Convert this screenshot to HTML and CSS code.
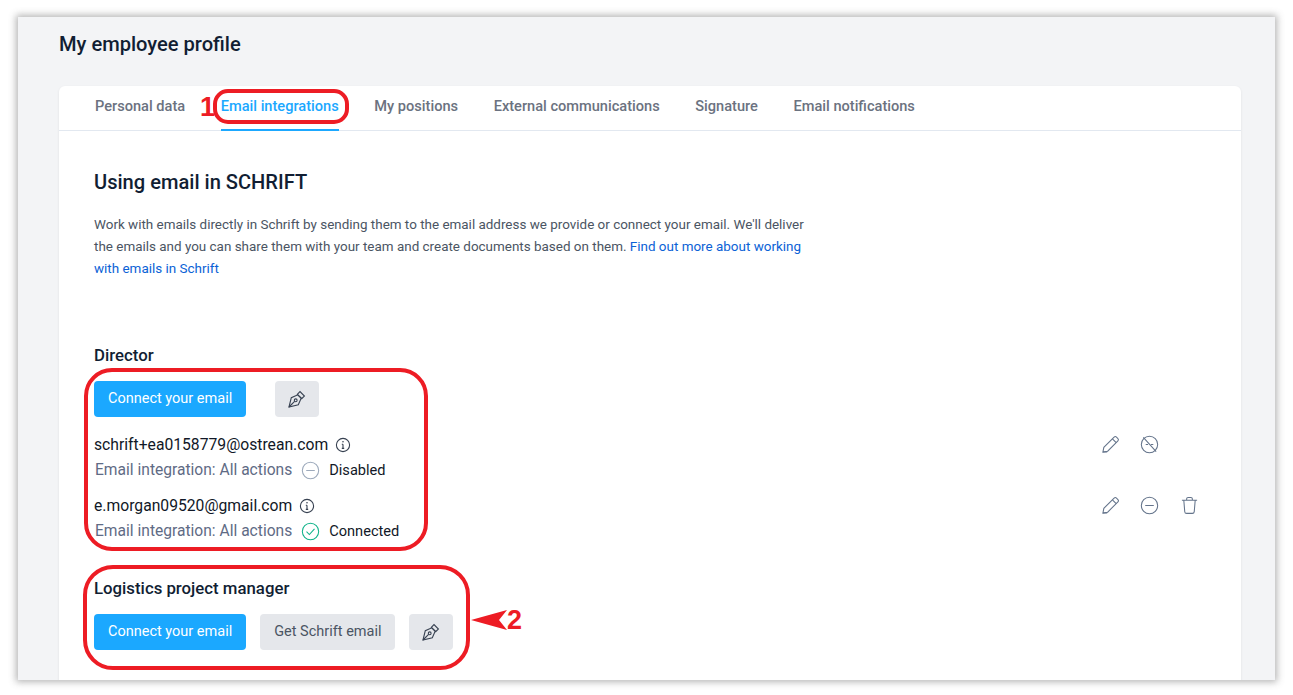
FILE: index.html
```html
<!DOCTYPE html>
<html lang="en">
<head>
    <meta charset="UTF-8">
    <meta name="viewport" content="width=device-width, initial-scale=1.0">
    <title>My employee profile</title>
    <link rel="stylesheet" href="styles.css">
</head>
<body>
    <svg class="icon-defs" width="0" height="0" aria-hidden="true">
        <symbol id="pen-nib" viewBox="0 0 20 20">
            <path d="M2 18L4.3 8.7l6.5-2.9 3.4 3.4-2.9 6.5z"/>
            <path d="M10.3 5.3L13 2.6 17.4 7l-2.7 2.7z"/>
            <path d="M2 18l5.6-5.6"/>
            <circle cx="8.7" cy="11.3" r="1.4"/>
        </symbol>
        <symbol id="pencil" viewBox="0 0 20 20">
            <path d="M2 18l1-5L13.8 2.2a1.8 1.8 0 0 1 2.5 0l1.5 1.5a1.8 1.8 0 0 1 0 2.5L7 17z"/>
            <path d="M2 18h4.5M12 4l4 4"/>
        </symbol>
        <symbol id="minus-circle" viewBox="0 0 20 20">
            <circle cx="10" cy="10" r="8.6"/>
            <path d="M5.5 10h9"/>
        </symbol>
    </svg>

    <div class="window">
        <h1 class="page-title">My employee profile</h1>

        <div class="card">
            <div class="tabs">
                <span class="tab">Personal data</span>
                <span class="tab active">Email integrations</span>
                <span class="tab">My positions</span>
                <span class="tab">External communications</span>
                <span class="tab">Signature</span>
                <span class="tab">Email notifications</span>
            </div>

            <div class="content">
                <h2 class="section-title">Using email in SCHRIFT</h2>
                <p class="intro">
                    Work with emails directly in Schrift by sending them to the email address we provide or connect your email. We'll deliver
                    the emails and you can share them with your team and create documents based on them.
                    <a class="link">Find out more about working with emails in Schrift</a>
                </p>

                <!-- Director -->
                <h3 class="position director">Director</h3>
                <div class="btn-row wide">
                    <button class="btn primary">Connect your email</button>
                    <button class="btn square"><svg class="pen"><use href="#pen-nib"/></svg></button>
                </div>

                <div class="mail first">
                    <div class="mail-info">
                        <div class="mail-address">schrift+ea0158779@ostrean.com
                            <svg class="info" viewBox="0 0 16 16"><circle cx="8" cy="8" r="6.6"/><path d="M8 7.2v4M6.8 11.4h2.4M6.8 7.2H8"/><circle class="dot" cx="8" cy="4.8" r=".8"/></svg>
                        </div>
                        <div class="mail-status">
                            <span class="status-label">Email integration: All actions</span>
                            <svg class="status-icon off"><use href="#minus-circle"/></svg>
                            <span class="status-text">Disabled</span>
                        </div>
                    </div>
                    <div class="mail-actions">
                        <svg class="action"><use href="#pencil"/></svg>
                        <svg class="action" viewBox="0 0 20 20"><circle cx="10" cy="10" r="8.6"/><path d="M3.5 2.5l13.5 15M6 10h2.5M11.5 10H14"/></svg>
                        <span class="action blank"></span>
                    </div>
                </div>

                <div class="mail">
                    <div class="mail-info">
                        <div class="mail-address">e.morgan09520@gmail.com
                            <svg class="info" viewBox="0 0 16 16"><circle cx="8" cy="8" r="6.6"/><path d="M8 7.2v4M6.8 11.4h2.4M6.8 7.2H8"/><circle class="dot" cx="8" cy="4.8" r=".8"/></svg>
                        </div>
                        <div class="mail-status">
                            <span class="status-label">Email integration: All actions</span>
                            <svg class="status-icon on" viewBox="0 0 20 20"><circle cx="10" cy="10" r="8.6"/><path d="M5.8 10.2l3 3 5.4-6"/></svg>
                            <span class="status-text">Connected</span>
                        </div>
                    </div>
                    <div class="mail-actions">
                        <svg class="action"><use href="#pencil"/></svg>
                        <svg class="action"><use href="#minus-circle"/></svg>
                        <svg class="action trash" viewBox="0 0 20 20"><path d="M2 4.5h16M7 4.5V3a1.5 1.5 0 0 1 1.5-1.5h3A1.5 1.5 0 0 1 13 3v1.5M4 4.5l1 12a2 2 0 0 0 2 1.8h6a2 2 0 0 0 2-1.8l1-12"/></svg>
                    </div>
                </div>

                <!-- Logistics project manager -->
                <h3 class="position logistics">Logistics project manager</h3>
                <div class="btn-row">
                    <button class="btn primary">Connect your email</button>
                    <button class="btn secondary">Get Schrift email</button>
                    <button class="btn square"><svg class="pen"><use href="#pen-nib"/></svg></button>
                </div>
            </div>
        </div>

        <!-- red annotations, window is the origin -->
        <div class="mark mark-tab"></div>
        <div class="mark mark-director"></div>
        <div class="mark mark-logistics"></div>
        <span class="mark-num num-1">1</span>
        <svg class="mark-arrow" viewBox="0 0 36 20"><path d="M0 10L36 0l-8 10 8 10z"/></svg>
        <span class="mark-num num-2">2</span>
    </div>
</body>
</html>
```

FILE: styles.css
```css
* {
    box-sizing: border-box;
}

body {
    margin: 0;
    background: #fff;
    font-family: Roboto, 'Liberation Sans', sans-serif;
    color: #111827;
    height: 695px;
    overflow: hidden;
}

.icon-defs {
    position: absolute;
}

.window {
    position: relative;
    width: 1257px;
    height: 663px;
    margin: 17px 0 0 18px;
    padding: 0 34px 0 41px;
    background: #f3f4f6;
    box-shadow: 0 0 7px 2px rgba(90, 90, 90, 0.45);
    overflow: hidden;
}

.page-title {
    margin: 0;
    padding-top: 15px;
    height: 69px;
    font-size: 20.1px;
    line-height: 24px;
    font-weight: 500;
    color: #111e33;
}

.card {
    background: #fff;
    border-radius: 6px 6px 0 0;
    box-shadow: 0 1px 3px rgba(0, 0, 0, 0.08);
    height: 620px;
}

/* tabs */
.tabs {
    display: flex;
    gap: 35.6px;
    height: 45px;
    padding-left: 36px;
    border-bottom: 1px solid #e2e8f0;
}

.tab {
    height: 45px;
    padding-top: 11px;
    font-size: 14.6px;
    line-height: 19px;
    font-weight: 500;
    color: #6b7280;
}

.tab.active {
    color: #1ba8ff;
    border-bottom: 2px solid #1ba8ff;
}

/* content */
.content {
    padding: 0 43px 0 35px;
}

.section-title {
    margin: 0;
    padding-top: 40px;
    font-size: 20.1px;
    line-height: 22px;
    font-weight: 500;
    color: #111e33;
}

.intro {
    width: 716px;
    margin: 21px 0 0;
    font-size: 13.44px;
    line-height: 22px;
    color: #4b5563;
}

.link {
    color: #0b62d6;
}

.position {
    margin: 0;
    font-size: 16.8px;
    line-height: 20px;
    font-weight: 500;
    color: #111e33;
}

.director {
    margin-top: 65px;
}

.logistics {
    margin-top: 35px;
}

.btn-row {
    display: flex;
    gap: 14px;
    margin-top: 16px;
}

.btn-row.wide {
    gap: 29px;
}

.btn {
    height: 36px;
    padding: 0 14px 2px;
    border: none;
    border-radius: 4px;
    font-family: inherit;
    font-size: 14.5px;
}

.btn.primary {
    background: #1ba8ff;
    color: #fff;
}

.btn.secondary {
    background: #e5e7eb;
    color: #4b5563;
}

.btn.square {
    width: 44px;
    padding: 0;
    background: #e5e7eb;
    display: flex;
    align-items: center;
    justify-content: center;
}

.pen {
    width: 20px;
    height: 20px;
    fill: none;
    stroke: #374151;
    stroke-width: 1.1;
}

/* connected mailboxes */
.mail {
    display: flex;
    justify-content: space-between;
    margin-top: 13px;
}

.mail.first {
    margin-top: 17px;
}

.mail-address {
    display: flex;
    align-items: center;
    gap: 7px;
    font-size: 15.7px;
    line-height: 22px;
    color: #111827;
}

.info {
    width: 16px;
    height: 16px;
    fill: none;
    stroke: #374151;
    stroke-width: 1.1;
}

.info .dot {
    fill: #374151;
    stroke: none;
}

.mail-status {
    display: flex;
    align-items: center;
    margin-top: 2px;
    margin-left: 1px;
    height: 24px;
}

.status-label {
    font-size: 15.6px;
    color: #5f6b85;
}

.status-icon {
    width: 19px;
    height: 19px;
    margin: 1px 0 0 9px;
    fill: none;
    stroke-width: 1.1;
}

.status-icon.off {
    stroke: #9ca9bb;
}

.status-icon.on {
    stroke: #10b38a;
}

.status-text {
    margin: -1px 0 0 9px;
    font-size: 14.6px;
    color: #111827;
}

.mail-actions {
    display: flex;
    gap: 20px;
    padding-top: 1px;
}

.action {
    width: 19px;
    height: 19px;
    fill: none;
    stroke: #64748b;
    stroke-width: 1.1;
}

.action.blank {
    display: block;
}

.action.trash {
    margin: 0 -1px 0 1px;
}

/* annotations */
.mark {
    position: absolute;
    border: 4px solid #ed1c24;
}

.mark-tab {
    left: 195px;
    top: 72px;
    width: 136px;
    height: 35px;
    border-radius: 15px;
}

.mark-director {
    left: 66px;
    top: 351px;
    width: 344px;
    height: 183px;
    border-radius: 28px;
}

.mark-logistics {
    left: 65px;
    top: 548px;
    width: 387px;
    height: 105px;
    border-radius: 30px;
}

.mark-num {
    position: absolute;
    font-family: 'Liberation Sans', sans-serif;
    font-size: 27px;
    line-height: 28px;
    font-weight: 700;
    color: #ed1c24;
}

.num-1 {
    left: 182px;
    top: 76px;
}

.num-2 {
    left: 489px;
    top: 589px;
}

.mark-arrow {
    position: absolute;
    left: 453px;
    top: 593px;
    width: 36px;
    height: 20px;
    fill: #ed1c24;
}
```
